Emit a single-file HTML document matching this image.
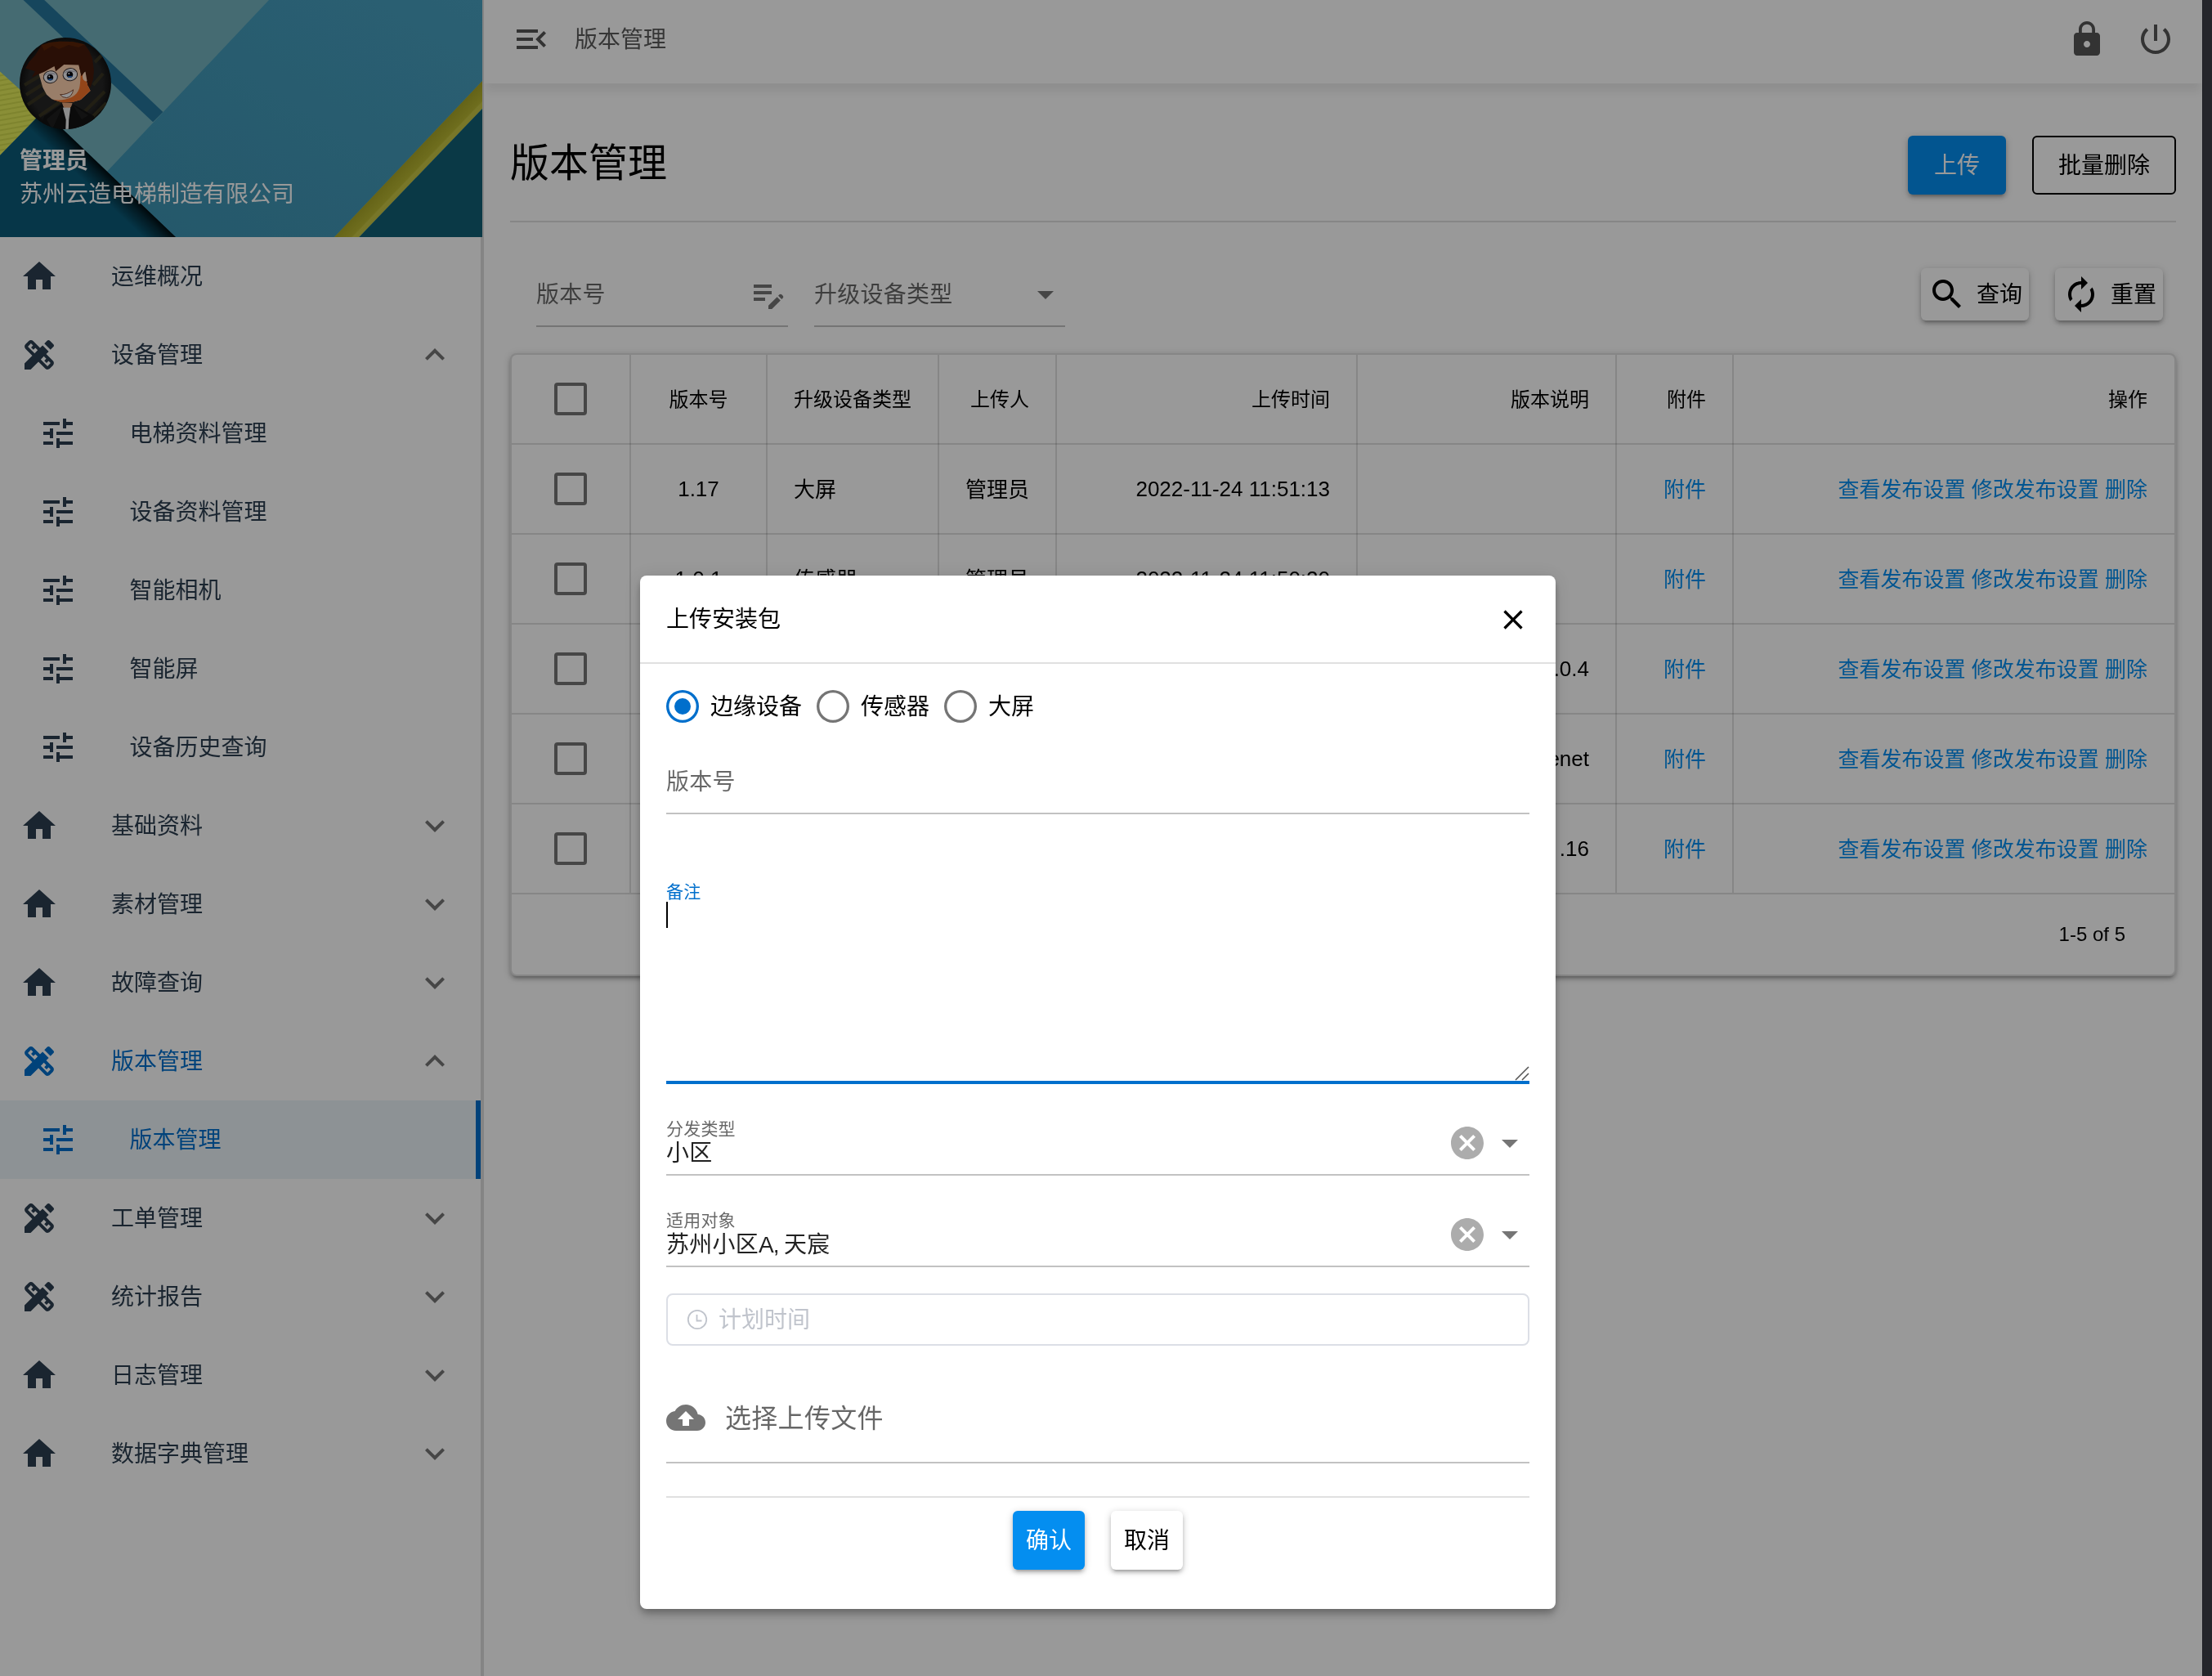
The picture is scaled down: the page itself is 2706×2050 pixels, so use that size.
<!DOCTYPE html>
<html lang="zh-CN">
<head>
<meta charset="utf-8">
<title>版本管理</title>
<style>
html,body{margin:0;padding:0}
body{width:2706px;height:2050px;overflow:hidden;position:relative;background:#fff;
 font-family:"Liberation Sans","Noto Sans CJK SC",sans-serif;font-size:28px;color:#000;
 -webkit-font-smoothing:antialiased}
.abs{position:absolute;box-sizing:border-box}
.ic{position:absolute;display:block;overflow:visible}
.t{position:absolute;white-space:nowrap;margin:0;padding:0;font-weight:400}
.gl{will-change:transform}
.sh2{box-shadow:0 2px 10px rgba(0,0,0,.2),0 4px 4px rgba(0,0,0,.14),0 6px 2px -4px rgba(0,0,0,.12)}
a{text-decoration:none;color:inherit}
</style>
</head>
<body>

<div id="app" class="abs gl" style="left:0;top:0;width:2694px;height:2050px;background:#fff;overflow:hidden">
<header class="abs" style="left:592px;top:0;width:2102px;height:102px;background:#fff;box-shadow:0 12px 10px -2px rgba(0,0,0,.07)">
<svg class="ic" style="left:33.5px;top:24px;width:48px;height:48px;fill:#555;" viewBox="0 0 24 24"><path d="M3 18h13v-2H3v2zm0-5h10v-2H3v2zm0-7v2h13V6H3zm18 9.59L17.42 12 21 8.41 19.59 7l-5 5 5 5L21 15.59z"/></svg>
<div class="t" style="left:111px;top:1px;height:96px;line-height:96px;font-size:28px;color:#5a5a5a;">版本管理</div>
<svg class="ic" style="left:1937px;top:24px;width:48px;height:48px;fill:#555;" viewBox="0 0 24 24"><path d="M18 8h-1V6c0-2.76-2.24-5-5-5S7 3.24 7 6v2H6c-1.1 0-2 .9-2 2v10c0 1.1.9 2 2 2h12c1.1 0 2-.9 2-2V10c0-1.1-.9-2-2-2zm-6 9c-1.1 0-2-.9-2-2s.9-2 2-2 2 .9 2 2-.9 2-2 2zm3.1-9H8.9V6c0-1.71 1.39-3.1 3.1-3.1 1.71 0 3.1 1.39 3.1 3.1v2z"/></svg>
<svg class="ic" style="left:2021px;top:24px;width:48px;height:48px;fill:#555;" viewBox="0 0 24 24"><path d="M13 3h-2v10h2V3zm4.83 2.17l-1.42 1.42C17.99 7.86 19 9.81 19 12c0 3.87-3.13 7-7 7s-7-3.13-7-7c0-2.19 1.01-4.14 2.58-5.42L6.17 5.17C4.23 6.82 3 9.26 3 12c0 4.97 4.03 9 9 9s9-4.03 9-9c0-2.74-1.23-5.18-3.17-6.83z"/></svg>
</header>
<aside class="abs" style="left:0;top:0;width:592px;height:2050px;background:#fff">
<div class="abs" style="left:588px;top:0px;width:4px;height:2050px;background:#dcdcdc"></div>
<svg class="ic" style="left:0;top:0;width:590px;height:290px" viewBox="0 0 590 290" preserveAspectRatio="none">
<defs>
<linearGradient id="gmid" x1="0" y1="1" x2="1" y2="0"><stop offset="0" stop-color="#3d92b1"/><stop offset="1" stop-color="#48a0c0"/></linearGradient>
<linearGradient id="gsh" gradientUnits="userSpaceOnUse" x1="131" y1="209.7" x2="112" y2="229.6"><stop offset="0" stop-color="#000" stop-opacity=".85"/><stop offset=".35" stop-color="#000" stop-opacity=".5"/><stop offset="1" stop-color="#000" stop-opacity="0"/></linearGradient>
<linearGradient id="gyel" gradientUnits="userSpaceOnUse" x1="500" y1="194" x2="525" y2="218"><stop offset="0" stop-color="#a8a628"/><stop offset=".45" stop-color="#b9b732"/><stop offset=".5" stop-color="#c8c645"/><stop offset="1" stop-color="#c4c244"/></linearGradient>
<pattern id="pst" width="6" height="6" patternUnits="userSpaceOnUse" patternTransform="rotate(-10)"><rect width="6" height="6" fill="#e6ee5c"/><rect width="6" height="2" fill="#d3dc4e"/></pattern>
</defs>
<rect width="590" height="290" fill="#73b2be"/>
<polygon points="28.5,0 54.2,0 199.4,137 187.1,149.2" fill="#26769b"/>
<polygon points="329,0 590,0 590,99 409,290 215,290 131,209.7" fill="url(#gmid)"/>
<polygon points="409,290 590,99 590,132.9 439.4,290" fill="url(#gyel)"/>
<polygon points="439.4,290 590,132.9 590,290" fill="#115f76"/>
<polygon points="0,87.6 53.2,135.4 0,190.1" fill="url(#pst)"/>
<polygon points="0,190.1 53.2,135.4 215,290 0,290" fill="#0a5a78"/>
<polygon points="53.2,135.4 215,290 160,290 20,170" fill="url(#gsh)"/>
</svg>
<svg class="ic" style="left:24px;top:46px;width:112px;height:112px" viewBox="0 0 112 112">
<defs><clipPath id="avc"><circle cx="56" cy="56" r="56"/></clipPath>
<radialGradient id="avbg" cx=".5" cy=".5" r=".5"><stop offset=".8" stop-color="#262626"/><stop offset="1" stop-color="#111"/></radialGradient></defs>
<g clip-path="url(#avc)">
<rect width="112" height="112" fill="url(#avbg)"/>
<g stroke="#3f3a22" stroke-width="4" opacity=".8"><path d="M6 58 L26 46 M8 70 L30 56 M10 82 L32 67 M24 96 L50 78 M90 58 L102 44 M80 90 L104 66 M88 98 L106 80 M92 30 L100 22"/></g>
<path d="M23.6 44.5 L42.5 33 L76.4 33 L83.5 58.7 L86.6 65 L74.8 76 L64.6 79.1 L52.8 79.5 L39.4 75.2 L33 69.7 L28.3 61 Z" fill="#ffd2b0"/>
<path d="M76 36 L83.5 58.7 L86.6 65 L74.8 76 L64.6 79.1 L52.8 79.5 L41 76 C56 78 70 73 73 62 C75 54 74 44 76 36 Z" fill="#f5732a"/>
<ellipse cx="81.5" cy="47.5" rx="4.6" ry="6" fill="#ffd9bd"/>
<path d="M72.4 33.5 L75.6 46.9 L80.3 40.6 Z" fill="#4a1e08"/>
<ellipse cx="37.8" cy="48.2" rx="8.6" ry="7.4" transform="rotate(-8 37.8 48.2)" fill="#f2f2f7" stroke="#3a3030" stroke-width="1"/>
<ellipse cx="61.8" cy="45.2" rx="8.8" ry="7.6" transform="rotate(-8 61.8 45.2)" fill="#f2f2f7" stroke="#3a3030" stroke-width="1"/>
<path d="M29.5 47 Q37 39 46 46 Q38 43 29.5 47Z M53.3 44 Q61 36 70.3 43 Q62 40 53.3 44Z" fill="#b9b9c4"/>
<circle cx="37.4" cy="48.8" r="3.8" fill="#05050c"/><circle cx="61.4" cy="45.3" r="3.8" fill="#05050c"/>
<path d="M34.2 50.6 a3.8 3.8 0 0 0 6.6 -.4z" fill="#2a72d0"/><path d="M58.2 47.2 a3.8 3.8 0 0 0 6.6 -.4z" fill="#2a72d0"/>
<circle cx="36.3" cy="47.4" r="1" fill="#fff"/><circle cx="60.3" cy="43.9" r="1" fill="#fff"/>
<path d="M49.6 69.7 Q58 70 65.7 63.8 Q64 72.5 57.5 73.6 Q52.5 73.6 49.6 69.7Z" fill="#f6f6f6" stroke="#6a2a10" stroke-width=".8"/>
<path d="M7.1 37.4 L11.8 29.5 L18.9 21.7 L26.8 9.1 L37 5.9 L48.8 4.7 L64.6 5.1 L79.5 8.3 L85 16.1 L89 25.6 L90.9 40.6 L89.8 51.6 L86.6 61 L83.5 58.7 L80.3 40.6 L75.6 46.9 L72.4 33.5 L54.3 33.1 L44.1 41.3 L42.5 35 L29.9 42.1 L23.6 44.5 L15 48.4 L18.9 41.3 Z" fill="#45190a"/>
<path d="M26.8 9.1 L37 5.9 L48.8 4.7 L64.6 5.1 L79.5 8.3 L72 12 L60 9 L48 14 L40 10 L30 16 Z" fill="#5a2408"/>
<path d="M52 80 L64.6 80 L62.6 86.2 L53.5 85.8 Z" fill="#e9a77c"/>
<path d="M30 96 L52 81 L57 92 L65.4 81.5 L90.6 95.7 L98 112 L26 112 Z" fill="#131313"/>
<path d="M33 100 L52 84 L50 90 L40 112 Z M65.4 83 L84 95 L76 100 Z" fill="#1f1f1f"/>
<path d="M52.8 85.4 L62.2 85.8 L60.2 100.4 L59.8 112 L56.3 112 L56.7 100.4 Z" fill="#ececec"/>
</g></svg>
<div class="t" style="left:24px;top:176px;height:42px;line-height:42px;font-size:28px;color:#fff;font-weight:700">管理员</div>
<div class="t" style="left:24px;top:217px;height:42px;line-height:42px;font-size:28px;color:#fff;">苏州云造电梯制造有限公司</div>
<nav>
<svg class="ic" style="left:24px;top:314px;width:48px;height:48px;fill:#2c3e50;" viewBox="0 0 24 24"><path d="M10 20v-6h4v6h5v-8h3L12 3 2 12h3v8z"/></svg>
<div class="t" style="left:136px;top:291px;height:96px;line-height:96px;font-size:28px;color:#2c3e50;">运维概况</div>
<svg class="ic" style="left:24px;top:410px;width:48px;height:48px;fill:#2c3e50;" viewBox="0 0 24 24"><path d="M16.24 11.51l1.57-1.57-3.75-3.75-1.57 1.57-4.14-4.13c-.78-.78-2.05-.78-2.83 0l-1.9 1.9c-.78.78-.78 2.05 0 2.83l4.13 4.13L3 17.25V21h3.75l4.76-4.76 4.13 4.13c.95.95 2.23.6 2.83 0l1.9-1.9c.78-.78.78-2.05 0-2.83l-4.13-4.13zm-7.06-.44L5.04 6.94l1.89-1.9L8.2 6.31 7.02 7.5l1.41 1.41 1.19-1.19 1.45 1.45-1.89 1.9zm7.88 7.89l-4.13-4.13 1.9-1.9 1.45 1.45-1.19 1.19 1.41 1.41 1.19-1.19 1.27 1.27-1.9 1.9zM20.71 7.04c.39-.39.39-1.02 0-1.41l-2.34-2.34c-.47-.47-1.12-.29-1.41 0l-1.83 1.83 3.75 3.75 1.83-1.83z"/></svg>
<div class="t" style="left:136px;top:387px;height:96px;line-height:96px;font-size:28px;color:#2c3e50;">设备管理</div>
<svg class="ic" style="left:508px;top:410px;width:48px;height:48px;fill:rgba(0,0,0,.54);transform:rotate(180deg);" viewBox="0 0 24 24"><path d="M7.41 8.59L12 13.17l4.59-4.58L18 10l-6 6-6-6 1.41-1.41z"/></svg>
<svg class="ic" style="left:46.8px;top:506px;width:48px;height:48px;fill:#2c3e50;" viewBox="0 0 24 24"><path d="M3 17v2h6v-2H3zM3 5v2h10V5H3zm10 16v-2h8v-2h-8v-2h-2v6h2zM7 9v2H3v2h4v2h2V9H7zm14 4v-2H11v2h10zm-6-4h2V7h4V5h-4V3h-2v6z"/></svg>
<div class="t" style="left:158.4px;top:483px;height:96px;line-height:96px;font-size:28px;color:#2c3e50;">电梯资料管理</div>
<svg class="ic" style="left:46.8px;top:602px;width:48px;height:48px;fill:#2c3e50;" viewBox="0 0 24 24"><path d="M3 17v2h6v-2H3zM3 5v2h10V5H3zm10 16v-2h8v-2h-8v-2h-2v6h2zM7 9v2H3v2h4v2h2V9H7zm14 4v-2H11v2h10zm-6-4h2V7h4V5h-4V3h-2v6z"/></svg>
<div class="t" style="left:158.4px;top:579px;height:96px;line-height:96px;font-size:28px;color:#2c3e50;">设备资料管理</div>
<svg class="ic" style="left:46.8px;top:698px;width:48px;height:48px;fill:#2c3e50;" viewBox="0 0 24 24"><path d="M3 17v2h6v-2H3zM3 5v2h10V5H3zm10 16v-2h8v-2h-8v-2h-2v6h2zM7 9v2H3v2h4v2h2V9H7zm14 4v-2H11v2h10zm-6-4h2V7h4V5h-4V3h-2v6z"/></svg>
<div class="t" style="left:158.4px;top:675px;height:96px;line-height:96px;font-size:28px;color:#2c3e50;">智能相机</div>
<svg class="ic" style="left:46.8px;top:794px;width:48px;height:48px;fill:#2c3e50;" viewBox="0 0 24 24"><path d="M3 17v2h6v-2H3zM3 5v2h10V5H3zm10 16v-2h8v-2h-8v-2h-2v6h2zM7 9v2H3v2h4v2h2V9H7zm14 4v-2H11v2h10zm-6-4h2V7h4V5h-4V3h-2v6z"/></svg>
<div class="t" style="left:158.4px;top:771px;height:96px;line-height:96px;font-size:28px;color:#2c3e50;">智能屏</div>
<svg class="ic" style="left:46.8px;top:890px;width:48px;height:48px;fill:#2c3e50;" viewBox="0 0 24 24"><path d="M3 17v2h6v-2H3zM3 5v2h10V5H3zm10 16v-2h8v-2h-8v-2h-2v6h2zM7 9v2H3v2h4v2h2V9H7zm14 4v-2H11v2h10zm-6-4h2V7h4V5h-4V3h-2v6z"/></svg>
<div class="t" style="left:158.4px;top:867px;height:96px;line-height:96px;font-size:28px;color:#2c3e50;">设备历史查询</div>
<svg class="ic" style="left:24px;top:986px;width:48px;height:48px;fill:#2c3e50;" viewBox="0 0 24 24"><path d="M10 20v-6h4v6h5v-8h3L12 3 2 12h3v8z"/></svg>
<div class="t" style="left:136px;top:963px;height:96px;line-height:96px;font-size:28px;color:#2c3e50;">基础资料</div>
<svg class="ic" style="left:508px;top:986px;width:48px;height:48px;fill:rgba(0,0,0,.54);" viewBox="0 0 24 24"><path d="M7.41 8.59L12 13.17l4.59-4.58L18 10l-6 6-6-6 1.41-1.41z"/></svg>
<svg class="ic" style="left:24px;top:1082px;width:48px;height:48px;fill:#2c3e50;" viewBox="0 0 24 24"><path d="M10 20v-6h4v6h5v-8h3L12 3 2 12h3v8z"/></svg>
<div class="t" style="left:136px;top:1059px;height:96px;line-height:96px;font-size:28px;color:#2c3e50;">素材管理</div>
<svg class="ic" style="left:508px;top:1082px;width:48px;height:48px;fill:rgba(0,0,0,.54);" viewBox="0 0 24 24"><path d="M7.41 8.59L12 13.17l4.59-4.58L18 10l-6 6-6-6 1.41-1.41z"/></svg>
<svg class="ic" style="left:24px;top:1178px;width:48px;height:48px;fill:#2c3e50;" viewBox="0 0 24 24"><path d="M10 20v-6h4v6h5v-8h3L12 3 2 12h3v8z"/></svg>
<div class="t" style="left:136px;top:1155px;height:96px;line-height:96px;font-size:28px;color:#2c3e50;">故障查询</div>
<svg class="ic" style="left:508px;top:1178px;width:48px;height:48px;fill:rgba(0,0,0,.54);" viewBox="0 0 24 24"><path d="M7.41 8.59L12 13.17l4.59-4.58L18 10l-6 6-6-6 1.41-1.41z"/></svg>
<svg class="ic" style="left:24px;top:1274px;width:48px;height:48px;fill:#006fcc;" viewBox="0 0 24 24"><path d="M16.24 11.51l1.57-1.57-3.75-3.75-1.57 1.57-4.14-4.13c-.78-.78-2.05-.78-2.83 0l-1.9 1.9c-.78.78-.78 2.05 0 2.83l4.13 4.13L3 17.25V21h3.75l4.76-4.76 4.13 4.13c.95.95 2.23.6 2.83 0l1.9-1.9c.78-.78.78-2.05 0-2.83l-4.13-4.13zm-7.06-.44L5.04 6.94l1.89-1.9L8.2 6.31 7.02 7.5l1.41 1.41 1.19-1.19 1.45 1.45-1.89 1.9zm7.88 7.89l-4.13-4.13 1.9-1.9 1.45 1.45-1.19 1.19 1.41 1.41 1.19-1.19 1.27 1.27-1.9 1.9zM20.71 7.04c.39-.39.39-1.02 0-1.41l-2.34-2.34c-.47-.47-1.12-.29-1.41 0l-1.83 1.83 3.75 3.75 1.83-1.83z"/></svg>
<div class="t" style="left:136px;top:1251px;height:96px;line-height:96px;font-size:28px;color:#006fcc;">版本管理</div>
<svg class="ic" style="left:508px;top:1274px;width:48px;height:48px;fill:rgba(0,0,0,.54);transform:rotate(180deg);" viewBox="0 0 24 24"><path d="M7.41 8.59L12 13.17l4.59-4.58L18 10l-6 6-6-6 1.41-1.41z"/></svg>
<div class="abs" style="left:0px;top:1346px;width:582px;height:96px;background:#ebf3f8"></div>
<div class="abs" style="left:582px;top:1346px;width:6px;height:96px;background:#006fcc"></div>
<svg class="ic" style="left:46.8px;top:1370px;width:48px;height:48px;fill:#006fcc;" viewBox="0 0 24 24"><path d="M3 17v2h6v-2H3zM3 5v2h10V5H3zm10 16v-2h8v-2h-8v-2h-2v6h2zM7 9v2H3v2h4v2h2V9H7zm14 4v-2H11v2h10zm-6-4h2V7h4V5h-4V3h-2v6z"/></svg>
<div class="t" style="left:158.4px;top:1347px;height:96px;line-height:96px;font-size:28px;color:#006fcc;">版本管理</div>
<svg class="ic" style="left:24px;top:1466px;width:48px;height:48px;fill:#2c3e50;" viewBox="0 0 24 24"><path d="M16.24 11.51l1.57-1.57-3.75-3.75-1.57 1.57-4.14-4.13c-.78-.78-2.05-.78-2.83 0l-1.9 1.9c-.78.78-.78 2.05 0 2.83l4.13 4.13L3 17.25V21h3.75l4.76-4.76 4.13 4.13c.95.95 2.23.6 2.83 0l1.9-1.9c.78-.78.78-2.05 0-2.83l-4.13-4.13zm-7.06-.44L5.04 6.94l1.89-1.9L8.2 6.31 7.02 7.5l1.41 1.41 1.19-1.19 1.45 1.45-1.89 1.9zm7.88 7.89l-4.13-4.13 1.9-1.9 1.45 1.45-1.19 1.19 1.41 1.41 1.19-1.19 1.27 1.27-1.9 1.9zM20.71 7.04c.39-.39.39-1.02 0-1.41l-2.34-2.34c-.47-.47-1.12-.29-1.41 0l-1.83 1.83 3.75 3.75 1.83-1.83z"/></svg>
<div class="t" style="left:136px;top:1443px;height:96px;line-height:96px;font-size:28px;color:#2c3e50;">工单管理</div>
<svg class="ic" style="left:508px;top:1466px;width:48px;height:48px;fill:rgba(0,0,0,.54);" viewBox="0 0 24 24"><path d="M7.41 8.59L12 13.17l4.59-4.58L18 10l-6 6-6-6 1.41-1.41z"/></svg>
<svg class="ic" style="left:24px;top:1562px;width:48px;height:48px;fill:#2c3e50;" viewBox="0 0 24 24"><path d="M16.24 11.51l1.57-1.57-3.75-3.75-1.57 1.57-4.14-4.13c-.78-.78-2.05-.78-2.83 0l-1.9 1.9c-.78.78-.78 2.05 0 2.83l4.13 4.13L3 17.25V21h3.75l4.76-4.76 4.13 4.13c.95.95 2.23.6 2.83 0l1.9-1.9c.78-.78.78-2.05 0-2.83l-4.13-4.13zm-7.06-.44L5.04 6.94l1.89-1.9L8.2 6.31 7.02 7.5l1.41 1.41 1.19-1.19 1.45 1.45-1.89 1.9zm7.88 7.89l-4.13-4.13 1.9-1.9 1.45 1.45-1.19 1.19 1.41 1.41 1.19-1.19 1.27 1.27-1.9 1.9zM20.71 7.04c.39-.39.39-1.02 0-1.41l-2.34-2.34c-.47-.47-1.12-.29-1.41 0l-1.83 1.83 3.75 3.75 1.83-1.83z"/></svg>
<div class="t" style="left:136px;top:1539px;height:96px;line-height:96px;font-size:28px;color:#2c3e50;">统计报告</div>
<svg class="ic" style="left:508px;top:1562px;width:48px;height:48px;fill:rgba(0,0,0,.54);" viewBox="0 0 24 24"><path d="M7.41 8.59L12 13.17l4.59-4.58L18 10l-6 6-6-6 1.41-1.41z"/></svg>
<svg class="ic" style="left:24px;top:1658px;width:48px;height:48px;fill:#2c3e50;" viewBox="0 0 24 24"><path d="M10 20v-6h4v6h5v-8h3L12 3 2 12h3v8z"/></svg>
<div class="t" style="left:136px;top:1635px;height:96px;line-height:96px;font-size:28px;color:#2c3e50;">日志管理</div>
<svg class="ic" style="left:508px;top:1658px;width:48px;height:48px;fill:rgba(0,0,0,.54);" viewBox="0 0 24 24"><path d="M7.41 8.59L12 13.17l4.59-4.58L18 10l-6 6-6-6 1.41-1.41z"/></svg>
<svg class="ic" style="left:24px;top:1754px;width:48px;height:48px;fill:#2c3e50;" viewBox="0 0 24 24"><path d="M10 20v-6h4v6h5v-8h3L12 3 2 12h3v8z"/></svg>
<div class="t" style="left:136px;top:1731px;height:96px;line-height:96px;font-size:28px;color:#2c3e50;">数据字典管理</div>
<svg class="ic" style="left:508px;top:1754px;width:48px;height:48px;fill:rgba(0,0,0,.54);" viewBox="0 0 24 24"><path d="M7.41 8.59L12 13.17l4.59-4.58L18 10l-6 6-6-6 1.41-1.41z"/></svg>
</nav>
</aside>
<main>
<h1 class="t" style="left:624px;top:164px;height:72px;line-height:72px;font-size:48px;color:#000;">版本管理</h1>
<div class="abs sh2" style="left:2334px;top:166px;width:120px;height:72px;background:#048ef0;border-radius:6px;color:#fff;text-align:center;line-height:74px;font-size:28px">上传</div>
<div class="abs" style="left:2486px;top:166px;width:176px;height:72px;border:2px solid #000;border-radius:6px;color:#000;text-align:center;line-height:70px;font-size:28px">批量删除</div>
<div class="abs" style="left:624px;top:270px;width:2038px;height:2px;background:rgba(0,0,0,.12)"></div>
<div class="t" style="left:656px;top:321px;height:80px;line-height:80px;font-size:28px;color:rgba(0,0,0,.6);letter-spacing:.00937em;">版本号</div>
<svg class="ic" style="left:916px;top:336px;width:48px;height:48px;fill:rgba(0,0,0,.54);" viewBox="0 0 24 24"><path d="M3 10h11v2H3v-2zm0-2h11V6H3v2zm0 8h7v-2H3v2zm15.01-3.13l.71-.71c.39-.39 1.02-.39 1.41 0l.71.71c.39.39.39 1.02 0 1.41l-.71.71-2.12-2.12zm-.71.71l-5.3 5.3V21h2.12l5.3-5.3-2.12-2.12z"/></svg>
<div class="abs" style="left:656px;top:398px;width:308px;height:2px;background:rgba(0,0,0,.24)"></div>
<div class="t" style="left:996px;top:321px;height:80px;line-height:80px;font-size:28px;color:rgba(0,0,0,.6);letter-spacing:.00937em;">升级设备类型</div>
<svg class="ic" style="left:1255px;top:336px;width:48px;height:48px;fill:rgba(0,0,0,.54);" viewBox="0 0 24 24"><path d="M7 10l5 5 5-5z"/></svg>
<div class="abs" style="left:996px;top:398px;width:307px;height:2px;background:rgba(0,0,0,.24)"></div>
<div class="abs sh2" style="left:2350px;top:328px;width:132px;height:64px;background:#fff;border-radius:6px"></div>
<svg class="ic" style="left:2358px;top:336px;width:48px;height:48px;fill:#000;" viewBox="0 0 24 24"><path d="M15.5 14h-.79l-.28-.27C15.41 12.59 16 11.11 16 9.5 16 5.91 13.09 3 9.5 3S3 5.91 3 9.5 5.91 16 9.5 16c1.61 0 3.09-.59 4.23-1.57l.27.28v.79l5 4.99L20.49 19l-4.99-5zm-6 0C7.01 14 5 11.99 5 9.5S7.01 5 9.5 5 14 7.01 14 9.5 11.99 14 9.5 14z"/></svg>
<div class="t" style="left:2418px;top:329px;height:64px;line-height:64px;font-size:28px;color:#000;">查询</div>
<div class="abs sh2" style="left:2514px;top:328px;width:132px;height:64px;background:#fff;border-radius:6px"></div>
<svg class="ic" style="left:2522px;top:336px;width:48px;height:48px;fill:#000;" viewBox="0 0 24 24"><path d="M12 6v3l4-4-4-4v3c-4.42 0-8 3.58-8 8 0 1.57.46 3.03 1.24 4.26L6.7 14.8c-.45-.83-.7-1.79-.7-2.8 0-3.31 2.69-6 6-6zm6.76 1.74L17.3 9.2c.44.84.7 1.79.7 2.8 0 3.31-2.69 6-6 6v-3l-4 4 4 4v-3c4.42 0 8-3.58 8-8 0-1.57-.46-3.03-1.24-4.26z"/></svg>
<div class="t" style="left:2582px;top:329px;height:64px;line-height:64px;font-size:28px;color:#000;">重置</div>
<section class="abs sh2" style="left:624px;top:432px;width:2038px;height:762px;border:2px solid rgba(0,0,0,.12);border-radius:8px;background:#fff"></section>
<div class="abs" style="left:770px;top:434px;width:2px;height:658px;background:rgba(0,0,0,.12)"></div>
<div class="abs" style="left:937px;top:434px;width:2px;height:658px;background:rgba(0,0,0,.12)"></div>
<div class="abs" style="left:1147px;top:434px;width:2px;height:658px;background:rgba(0,0,0,.12)"></div>
<div class="abs" style="left:1291px;top:434px;width:2px;height:658px;background:rgba(0,0,0,.12)"></div>
<div class="abs" style="left:1659px;top:434px;width:2px;height:658px;background:rgba(0,0,0,.12)"></div>
<div class="abs" style="left:1976px;top:434px;width:2px;height:658px;background:rgba(0,0,0,.12)"></div>
<div class="abs" style="left:2119px;top:434px;width:2px;height:658px;background:rgba(0,0,0,.12)"></div>
<div class="abs" style="left:626px;top:542px;width:2034px;height:2px;background:rgba(0,0,0,.12)"></div>
<div class="abs" style="left:626px;top:652px;width:2034px;height:2px;background:rgba(0,0,0,.12)"></div>
<div class="abs" style="left:626px;top:762px;width:2034px;height:2px;background:rgba(0,0,0,.12)"></div>
<div class="abs" style="left:626px;top:872px;width:2034px;height:2px;background:rgba(0,0,0,.12)"></div>
<div class="abs" style="left:626px;top:982px;width:2034px;height:2px;background:rgba(0,0,0,.12)"></div>
<div class="abs" style="left:626px;top:1092px;width:2034px;height:2px;background:rgba(0,0,0,.12)"></div>
<div class="abs" style="left:678px;top:468px;width:40px;height:40px;border:4px solid rgba(0,0,0,.54);border-radius:4px"></div>
<div class="t" style="left:804px;top:435px;height:108px;line-height:108px;font-size:24px;color:#000;width:101px;text-align:center;">版本号</div>
<div class="t" style="left:971px;top:435px;height:108px;line-height:108px;font-size:24px;color:#000;width:144px;text-align:left;">升级设备类型</div>
<div class="t" style="left:1181px;top:435px;height:108px;line-height:108px;font-size:24px;color:#000;width:78px;text-align:right;">上传人</div>
<div class="t" style="left:1325px;top:435px;height:108px;line-height:108px;font-size:24px;color:#000;width:302px;text-align:right;">上传时间</div>
<div class="t" style="left:1693px;top:435px;height:108px;line-height:108px;font-size:24px;color:#000;width:251px;text-align:right;">版本说明</div>
<div class="t" style="left:2010px;top:435px;height:108px;line-height:108px;font-size:24px;color:#000;width:77px;text-align:right;">附件</div>
<div class="t" style="left:2153px;top:435px;height:108px;line-height:108px;font-size:24px;color:#000;width:474px;text-align:right;">操作</div>
<div class="abs" style="left:678px;top:578px;width:40px;height:40px;border:4px solid rgba(0,0,0,.54);border-radius:4px"></div>
<div class="t" style="left:804px;top:544px;height:108px;line-height:108px;font-size:26px;color:#000;width:101px;text-align:center;">1.17</div>
<div class="t" style="left:971px;top:545px;height:108px;line-height:108px;font-size:26px;color:#000;width:144px;text-align:left;">大屏</div>
<div class="t" style="left:1181px;top:545px;height:108px;line-height:108px;font-size:26px;color:#000;width:78px;text-align:right;">管理员</div>
<div class="t" style="left:1325px;top:544px;height:108px;line-height:108px;font-size:26px;color:#000;width:302px;text-align:right;">2022-11-24 11:51:13</div>
<div class="t" style="left:1693px;top:544px;height:108px;line-height:108px;font-size:26px;color:#000;width:251px;text-align:right;"></div>
<div class="t" style="left:2010px;top:545px;height:108px;line-height:108px;font-size:26px;color:#048ef0;width:77px;text-align:right;"><a>附件</a></div>
<div class="t" style="left:2153px;top:545px;height:108px;line-height:108px;font-size:26px;color:#048ef0;width:474px;text-align:right;"><a>查看发布设置</a> <a>修改发布设置</a> <a>删除</a></div>
<div class="abs" style="left:678px;top:688px;width:40px;height:40px;border:4px solid rgba(0,0,0,.54);border-radius:4px"></div>
<div class="t" style="left:804px;top:654px;height:108px;line-height:108px;font-size:26px;color:#000;width:101px;text-align:center;">1.0.1</div>
<div class="t" style="left:971px;top:655px;height:108px;line-height:108px;font-size:26px;color:#000;width:144px;text-align:left;">传感器</div>
<div class="t" style="left:1181px;top:655px;height:108px;line-height:108px;font-size:26px;color:#000;width:78px;text-align:right;">管理员</div>
<div class="t" style="left:1325px;top:654px;height:108px;line-height:108px;font-size:26px;color:#000;width:302px;text-align:right;">2022-11-24 11:50:20</div>
<div class="t" style="left:1693px;top:654px;height:108px;line-height:108px;font-size:26px;color:#000;width:251px;text-align:right;"></div>
<div class="t" style="left:2010px;top:655px;height:108px;line-height:108px;font-size:26px;color:#048ef0;width:77px;text-align:right;"><a>附件</a></div>
<div class="t" style="left:2153px;top:655px;height:108px;line-height:108px;font-size:26px;color:#048ef0;width:474px;text-align:right;"><a>查看发布设置</a> <a>修改发布设置</a> <a>删除</a></div>
<div class="abs" style="left:678px;top:798px;width:40px;height:40px;border:4px solid rgba(0,0,0,.54);border-radius:4px"></div>
<div class="t" style="left:804px;top:764px;height:108px;line-height:108px;font-size:26px;color:#000;width:101px;text-align:center;">1.0.4</div>
<div class="t" style="left:971px;top:765px;height:108px;line-height:108px;font-size:26px;color:#000;width:144px;text-align:left;">边缘设备</div>
<div class="t" style="left:1181px;top:765px;height:108px;line-height:108px;font-size:26px;color:#000;width:78px;text-align:right;">管理员</div>
<div class="t" style="left:1325px;top:764px;height:108px;line-height:108px;font-size:26px;color:#000;width:302px;text-align:right;">2022-11-23 16:42:08</div>
<div class="t" style="left:1693px;top:764px;height:108px;line-height:108px;font-size:26px;color:#000;width:251px;text-align:right;">1.0.4</div>
<div class="t" style="left:2010px;top:765px;height:108px;line-height:108px;font-size:26px;color:#048ef0;width:77px;text-align:right;"><a>附件</a></div>
<div class="t" style="left:2153px;top:765px;height:108px;line-height:108px;font-size:26px;color:#048ef0;width:474px;text-align:right;"><a>查看发布设置</a> <a>修改发布设置</a> <a>删除</a></div>
<div class="abs" style="left:678px;top:908px;width:40px;height:40px;border:4px solid rgba(0,0,0,.54);border-radius:4px"></div>
<div class="t" style="left:804px;top:874px;height:108px;line-height:108px;font-size:26px;color:#000;width:101px;text-align:center;">1.0.3</div>
<div class="t" style="left:971px;top:875px;height:108px;line-height:108px;font-size:26px;color:#000;width:144px;text-align:left;">边缘设备</div>
<div class="t" style="left:1181px;top:875px;height:108px;line-height:108px;font-size:26px;color:#000;width:78px;text-align:right;">管理员</div>
<div class="t" style="left:1325px;top:874px;height:108px;line-height:108px;font-size:26px;color:#000;width:302px;text-align:right;">2022-11-23 15:20:31</div>
<div class="t" style="left:1693px;top:874px;height:108px;line-height:108px;font-size:26px;color:#000;width:251px;text-align:right;">ethenet</div>
<div class="t" style="left:2010px;top:875px;height:108px;line-height:108px;font-size:26px;color:#048ef0;width:77px;text-align:right;"><a>附件</a></div>
<div class="t" style="left:2153px;top:875px;height:108px;line-height:108px;font-size:26px;color:#048ef0;width:474px;text-align:right;"><a>查看发布设置</a> <a>修改发布设置</a> <a>删除</a></div>
<div class="abs" style="left:678px;top:1018px;width:40px;height:40px;border:4px solid rgba(0,0,0,.54);border-radius:4px"></div>
<div class="t" style="left:804px;top:984px;height:108px;line-height:108px;font-size:26px;color:#000;width:101px;text-align:center;">1.16</div>
<div class="t" style="left:971px;top:985px;height:108px;line-height:108px;font-size:26px;color:#000;width:144px;text-align:left;">大屏</div>
<div class="t" style="left:1181px;top:985px;height:108px;line-height:108px;font-size:26px;color:#000;width:78px;text-align:right;">管理员</div>
<div class="t" style="left:1325px;top:984px;height:108px;line-height:108px;font-size:26px;color:#000;width:302px;text-align:right;">2022-11-22 10:05:47</div>
<div class="t" style="left:1693px;top:984px;height:108px;line-height:108px;font-size:26px;color:#000;width:251px;text-align:right;"><span style="position:relative;left:-4px">1</span>.16</div>
<div class="t" style="left:2010px;top:985px;height:108px;line-height:108px;font-size:26px;color:#048ef0;width:77px;text-align:right;"><a>附件</a></div>
<div class="t" style="left:2153px;top:985px;height:108px;line-height:108px;font-size:26px;color:#048ef0;width:474px;text-align:right;"><a>查看发布设置</a> <a>修改发布设置</a> <a>删除</a></div>
<div class="t" style="left:2400px;top:1094px;height:98px;line-height:98px;font-size:24px;color:#000;width:200px;text-align:right;">1-5 of 5</div>
</main>
</div>
<div class="abs" style="left:0px;top:0px;width:2694px;height:2050px;background:rgba(0,0,0,.4)"></div>
<div class="abs gl" role="dialog" style="left:783px;top:704px;width:1120px;height:1264px;background:#fff;border-radius:8px;box-shadow:0 4px 8px -2px rgba(0,0,0,.2),0 8px 10px rgba(0,0,0,.14),0 2px 20px rgba(0,0,0,.12)">
<div class="t" style="left:32px;top:33px;height:42px;line-height:42px;font-size:28px;color:#000;">上传安装包</div>
<svg class="ic" style="left:1048px;top:34px;width:40px;height:40px;fill:#000;" viewBox="0 0 24 24"><path d="M19 6.41L17.59 5 12 10.59 6.41 5 5 6.41 10.59 12 5 17.59 6.41 19 12 13.41 17.59 19 19 17.59 13.41 12z"/></svg>
<div class="abs" style="left:0px;top:106px;width:1120px;height:2px;background:rgba(0,0,0,.12)"></div>
<svg class="ic" style="left:32px;top:140px;width:40px;height:40px;fill:#006fcc" viewBox="0 0 24 24"><path d="M12,22a10,10 0 0 1 -10,-10a10,10 0 0 1 10,-10a10,10 0 0 1 10,10a10,10 0 0 1 -10,10m0,-22a12,12 0 0 0 -12,12a12,12 0 0 0 12,12a12,12 0 0 0 12,-12a12,12 0 0 0 -12,-12"/><path d="M12,6a6,6 0 0 0 -6,6a6,6 0 0 0 6,6a6,6 0 0 0 6,-6a6,6 0 0 0 -6,-6"/></svg>
<div class="t" style="left:86px;top:141px;height:40px;line-height:40px;font-size:28px;color:#000;">边缘设备</div>
<svg class="ic" style="left:216px;top:140px;width:40px;height:40px;fill:rgba(0,0,0,.54)" viewBox="0 0 24 24"><path d="M12,22a10,10 0 0 1 -10,-10a10,10 0 0 1 10,-10a10,10 0 0 1 10,10a10,10 0 0 1 -10,10m0,-22a12,12 0 0 0 -12,12a12,12 0 0 0 12,12a12,12 0 0 0 12,-12a12,12 0 0 0 -12,-12"/></svg>
<div class="t" style="left:270px;top:141px;height:40px;line-height:40px;font-size:28px;color:#000;">传感器</div>
<svg class="ic" style="left:372px;top:140px;width:40px;height:40px;fill:rgba(0,0,0,.54)" viewBox="0 0 24 24"><path d="M12,22a10,10 0 0 1 -10,-10a10,10 0 0 1 10,-10a10,10 0 0 1 10,10a10,10 0 0 1 -10,10m0,-22a12,12 0 0 0 -12,12a12,12 0 0 0 12,12a12,12 0 0 0 12,-12a12,12 0 0 0 -12,-12"/></svg>
<div class="t" style="left:426px;top:141px;height:40px;line-height:40px;font-size:28px;color:#000;">大屏</div>
<div class="t" style="left:32px;top:213px;height:80px;line-height:80px;font-size:28px;color:rgba(0,0,0,.6);letter-spacing:.00937em;">版本号</div>
<div class="abs" style="left:32px;top:290px;width:1056px;height:2px;background:rgba(0,0,0,.24)"></div>
<div class="t" style="left:32px;top:371px;height:32px;line-height:32px;font-size:21px;color:#006fcc;letter-spacing:.00937em;">备注</div>
<div class="abs" style="left:32px;top:399px;width:2px;height:32px;background:#000"></div>
<svg class="ic" style="left:1070px;top:600px;width:18px;height:18px" viewBox="0 0 18 18"><path d="M1 17 L17 1 M9 17 L17 9" stroke="#555" stroke-width="1.6" fill="none"/></svg>
<div class="abs" style="left:32px;top:618px;width:1056px;height:4px;background:#006fcc"></div>
<div class="t" style="left:32px;top:661px;height:32px;line-height:32px;font-size:21px;color:rgba(0,0,0,.6);letter-spacing:.00937em;">分发类型</div><div class="t" style="left:32px;top:683px;height:48px;line-height:48px;font-size:28px;color:rgba(0,0,0,.87);letter-spacing:.00937em;">小区</div><svg class="ic" style="left:988px;top:670px;width:48px;height:48px;fill:rgba(0,0,0,.324);" viewBox="0 0 24 24"><path d="M12 2C6.47 2 2 6.47 2 12s4.47 10 10 10 10-4.47 10-10S17.53 2 12 2zm5 13.59L15.59 17 12 13.41 8.41 17 7 15.59 10.59 12 7 8.41 8.41 7 12 10.59 15.59 7 17 8.41 13.41 12 17 15.59z"/></svg><svg class="ic" style="left:1040px;top:670px;width:48px;height:48px;fill:rgba(0,0,0,.54);" viewBox="0 0 24 24"><path d="M7 10l5 5 5-5z"/></svg><div class="abs" style="left:32px;top:732px;width:1056px;height:2px;background:rgba(0,0,0,.24)"></div>
<div class="t" style="left:32px;top:773px;height:32px;line-height:32px;font-size:21px;color:rgba(0,0,0,.6);letter-spacing:.00937em;">适用对象</div><div class="t" style="left:32px;top:795px;height:48px;line-height:48px;font-size:28px;color:rgba(0,0,0,.87);letter-spacing:.00937em;">苏州小区<span style="letter-spacing:-1.1px">A, </span>天宸</div><svg class="ic" style="left:988px;top:782px;width:48px;height:48px;fill:rgba(0,0,0,.324);" viewBox="0 0 24 24"><path d="M12 2C6.47 2 2 6.47 2 12s4.47 10 10 10 10-4.47 10-10S17.53 2 12 2zm5 13.59L15.59 17 12 13.41 8.41 17 7 15.59 10.59 12 7 8.41 8.41 7 12 10.59 15.59 7 17 8.41 13.41 12 17 15.59z"/></svg><svg class="ic" style="left:1040px;top:782px;width:48px;height:48px;fill:rgba(0,0,0,.54);" viewBox="0 0 24 24"><path d="M7 10l5 5 5-5z"/></svg><div class="abs" style="left:32px;top:844px;width:1056px;height:2px;background:rgba(0,0,0,.24)"></div>
<div class="abs" style="left:32px;top:878px;width:1056px;height:64px;border:2px solid #dcdfe6;border-radius:8px;background:#fff"></div>
<svg class="ic" style="left:56px;top:896px;width:28px;height:28px" viewBox="0 0 28 28"><circle cx="14" cy="14" r="11.2" fill="none" stroke="#c0c4cc" stroke-width="1.8"/><path d="M13.5 8 V15.5 H19.5" fill="none" stroke="#c0c4cc" stroke-width="1.8"/></svg>
<div class="t" style="left:96px;top:879px;height:64px;line-height:64px;font-size:28px;color:#c0c4cc;">计划时间</div>
<svg class="ic" style="left:32px;top:1006px;width:48px;height:48px;fill:rgba(0,0,0,.54);" viewBox="0 0 24 24"><path d="M19.35 10.04C18.67 6.59 15.64 4 12 4 9.11 4 6.6 5.64 5.35 8.04 2.34 8.36 0 10.91 0 14c0 3.31 2.69 6 6 6h13c2.76 0 5-2.24 5-5 0-2.64-2.05-4.78-4.65-4.96zM14 13v4h-4v-4H7l5-5 5 5h-3z"/></svg>
<div class="t" style="left:104px;top:975px;height:112px;line-height:112px;font-size:32px;color:rgba(0,0,0,.6);letter-spacing:.00937em;">选择上传文件</div>
<div class="abs" style="left:32px;top:1084px;width:1056px;height:2px;background:rgba(0,0,0,.24)"></div>
<div class="abs" style="left:32px;top:1126px;width:1056px;height:2px;background:rgba(0,0,0,.12)"></div>
<div class="abs sh2" style="left:456px;top:1144px;width:88px;height:72px;background:#048ef0;border-radius:6px;color:#fff;text-align:center;line-height:74px;font-size:28px">确认</div>
<div class="abs sh2" style="left:576px;top:1144px;width:88px;height:72px;background:#fff;border-radius:6px;color:#000;text-align:center;line-height:74px;font-size:28px">取消</div>
</div>
<div class="abs" style="left:2694px;top:0px;width:12px;height:2050px;background:#25262b;border-left:1px solid #1b1c22"></div>

</body>
</html>
